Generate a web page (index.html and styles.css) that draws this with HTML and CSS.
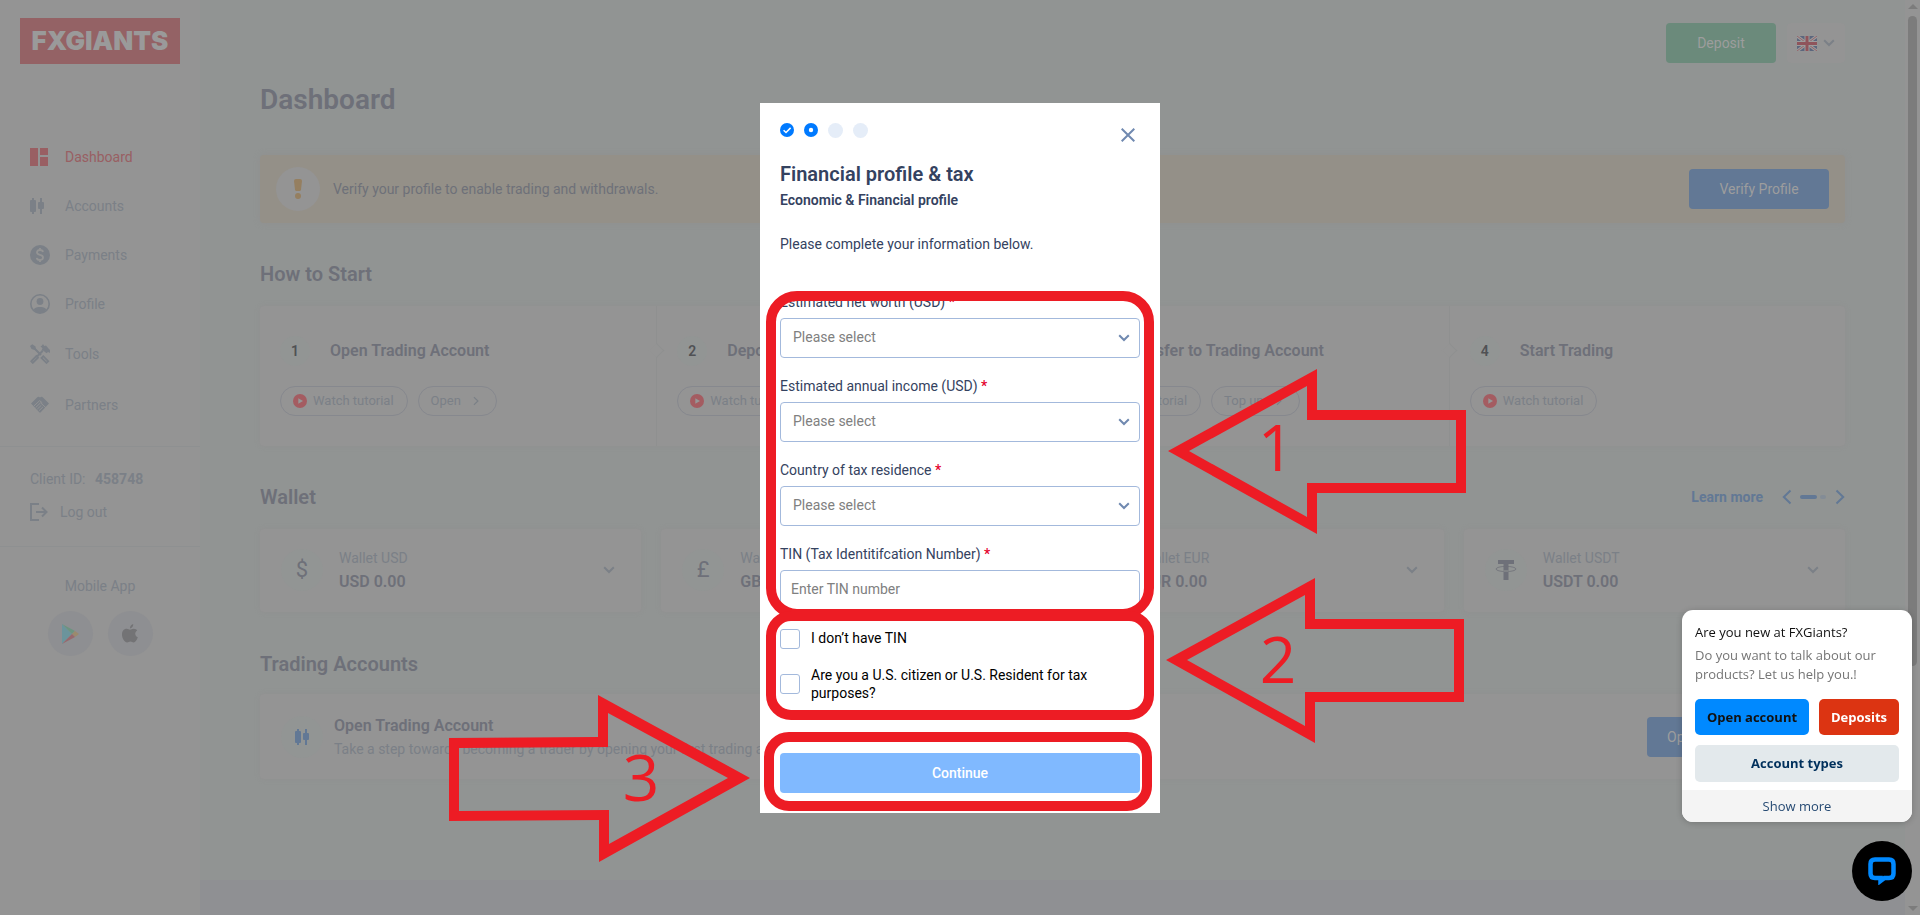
FILE: index.html
```html
<!DOCTYPE html>
<html lang="en">
<head>
<meta charset="utf-8">
<title>FXGiants - Dashboard</title>
<link rel="stylesheet" href="styles.css">
</head>
<body>
<svg class="sprite" aria-hidden="true">
  <symbol id="chev-down" viewBox="0 0 12 8"><path d="M1.2 1.2 6 6l4.800-4.800" fill="none" stroke="currentColor" stroke-width="2"/></symbol>
  <symbol id="chev-right" viewBox="0 0 10 16"><path d="M1.500 1.500 8.200 8l-6.700 6.500" fill="none" stroke="currentColor" stroke-width="2"/></symbol>
  <symbol id="candles" viewBox="0 0 14 16"><path d="M0 3q0-1 1-1h1V0h2v2h1q1 0 1 1v10q0 1-1 1H4v2H2v-2H1q-1 0-1-1zM8 5q0-1 1-1h1V0h2v4h1q1 0 1 1v5q0 1-1 1h-1v5h-2v-5H9q-1 0-1-1z" fill="currentColor"/></symbol>
  <symbol id="play" viewBox="0 0 14 14"><circle cx="7" cy="7" r="7" fill="#a45c61"/><path d="M5.300 4.200v5.600L10 7z" fill="#979797"/></symbol>
</svg>
<div class="page">
  <aside class="sidebar">
    <a class="logo" href="#">FXGIANTS</a>
    <nav class="nav">
      <a class="nav-item active" href="#"><span class="nav-icon"><svg width="18" height="18" viewBox="0 0 18 18"><path d="M0 0h8v18H0zM10 0h8v7h-8zM10 9h8v9h-8z" fill="currentColor"/></svg></span>Dashboard</a>
      <a class="nav-item" href="#"><span class="nav-icon"><svg width="14" height="16"><use href="#candles"/></svg></span>Accounts</a>
      <a class="nav-item" href="#"><span class="nav-icon"><svg width="20" height="20" viewBox="0 0 20 20"><circle cx="10" cy="10" r="10" fill="currentColor"/><path d="M13 7q-.3-2-3-2T7 7.200q0 2 3 2.600t3 2.800Q13 15 10 15t-3.200-2.200M10 3v2.200M10 14.800V17" fill="none" stroke="#949494" stroke-width="1.800"/></svg></span>Payments</a>
      <a class="nav-item" href="#"><span class="nav-icon"><svg width="20" height="20" viewBox="0 0 20 20"><circle cx="10" cy="10" r="9.200" fill="none" stroke="currentColor" stroke-width="1.600"/><circle cx="10" cy="7.500" r="3.400" fill="currentColor"/><path d="M3.500 15.500C5 13.500 7.500 13 10 13s5 .5 6.500 2.500Q14 19 10 19t-6.500-3.500z" fill="currentColor"/></svg></span>Profile</a>
      <a class="nav-item tall" href="#"><span class="nav-icon"><svg width="20" height="20" viewBox="0 0 20 20" fill="none" stroke="currentColor"><path d="M3 3l8 8" stroke-width="2"/><path d="M0 2 2.300.2 5.500 2.500 6 5.500 3.800 5.800 1.500 5z" fill="currentColor" stroke="none"/><path d="M13.200 12.200l5 5-1.700 1.700-5-5z" stroke-width="1.800"/><path d="M12.800 6.800l-6 6" stroke-width="2"/><path d="M6.500 12 1.200 17.300l1.600 1.600L8 13.700z" stroke-width="1.800"/><path d="M10.500 2.500 12 1.500 13 0l1.300 2L16 1.500l2.500 3L20 6v3l-2-1-1.500 1.200-3-2.500-2-.2 1-2.200z" fill="currentColor" stroke="none"/></svg></span>Tools</a>
      <a class="nav-item tall" href="#"><span class="nav-icon"><svg width="20" height="17" viewBox="0 0 20 17"><path d="M1 7.500 7 1.400Q8.500.2 10 1.500 11.500.2 13 1.400l6 6.100-8.500 9-1 0z" fill="currentColor"/><path d="M4 9.900 9.700 4.600l2.600 2.300M5.700 11.500l4.900-4.700 5.800 5.400M7.300 13.100l4-3.800M9 14.700l3.800-3.600" fill="none" stroke="#949494" stroke-width=".9"/></svg></span>Partners</a>
    </nav>
    <div class="client">
      <p class="client-id">Client ID: <strong>458748</strong></p>
      <a class="logout" href="#"><svg width="18" height="18" viewBox="0 0 18 18" fill="none" stroke="currentColor" stroke-width="2"><path d="M9 1H1v16h8M6 9h10.500M12 4.500 16.500 9 12 13.500"/></svg>Log out</a>
    </div>
    <div class="apps">
      <p>Mobile App</p>
      <div class="app-links">
        <a class="app" href="#" aria-label="Google Play"><svg width="17" height="20" viewBox="0 0 17 20"><path d="M0 0v20L10 10z" fill="#6b949c"/><path d="M0 0 13 7l-3 3z" fill="#6c9480"/><path d="M13 7l4 3-4 3-3-3z" fill="#9b8a6d"/><path d="M0 20l10-10 3 3z" fill="#97696e"/></svg></a>
        <a class="app" href="#" aria-label="App Store"><svg width="16" height="19" viewBox="0 0 16 19"><path d="M11.200 0q.3 3.200-3.200 4.500Q7.800 1 11.200 0zM8 5.700c1 0 2-1 3.800-1 1.500 0 2.800.8 3.400 1.800-3 1.800-2.300 5.600.6 6.700-.9 2.600-2.400 5.200-4.200 5.200-1.300 0-1.700-.8-3.200-.8s-2 .8-3.200.8C2.800 18.400 0 14.500 0 10.500 0 6.800 2.200 4.700 4.600 4.700c1.500 0 2.500 1 3.400 1z" fill="#737375"/></svg></a>
      </div>
    </div>
  </aside>

  <div class="content">
    <main class="main">
      <header class="topbar">
        <button class="btn btn-green">Deposit</button>
        <button class="lang" aria-label="Language"><svg width="20" height="15" viewBox="0 0 20 15"><path d="M0 0h20v15H0z" fill="#5c667d"/><path d="M0 0l20 15M20 0 0 15" stroke="#9c9c9c" stroke-width="3"/><path d="M0 0l20 15M20 0 0 15" stroke="#956469" stroke-width="1"/><path d="M10 0v15M0 7.500h20" stroke="#9c9c9c" stroke-width="5"/><path d="M10 0v15M0 7.500h20" stroke="#8f545b" stroke-width="3"/></svg><svg width="12" height="8"><use href="#chev-down"/></svg></button>
      </header>
      <h1>Dashboard</h1>
      <div class="alert">
        <span class="alert-icon"><svg width="8" height="20" viewBox="0 0 8 20"><path d="M0 2q0-2 2-2h4q2 0 2 2L7 10.500Q6.800 12 5.500 12h-3Q1.200 12 1 10.500z" fill="#957f60"/><circle cx="4" cy="17" r="3" fill="#957f60"/></svg></span>
        <p>Verify your profile to enable trading and withdrawals.</p>
        <button class="btn btn-verify">Verify Profile</button>
      </div>

      <h2>How to Start</h2>
      <section class="steps">
        <div class="step"><div class="step-head"><span class="num">1</span><h3>Open Trading Account</h3></div>
          <div class="pills"><button class="pill"><svg width="14" height="14"><use href="#play"/></svg>Watch tutorial</button><button class="pill go">Open<svg width="6" height="10"><use href="#chev-right"/></svg></button></div></div>
        <div class="step"><div class="step-head"><span class="num">2</span><h3>Deposit Funds</h3></div>
          <div class="pills"><button class="pill"><svg width="14" height="14"><use href="#play"/></svg>Watch tutorial</button></div></div>
        <div class="step"><div class="step-head"><span class="num">3</span><h3>Transfer to Trading Account</h3></div>
          <div class="pills"><button class="pill"><svg width="14" height="14"><use href="#play"/></svg>Watch tutorial</button><button class="pill go">Top up<svg width="6" height="10"><use href="#chev-right"/></svg></button></div></div>
        <div class="step"><div class="step-head"><span class="num">4</span><h3>Start Trading</h3></div>
          <div class="pills"><button class="pill"><svg width="14" height="14"><use href="#play"/></svg>Watch tutorial</button></div></div>
      </section>

      <div class="row-head">
        <h2>Wallet</h2>
        <div class="pager"><a href="#">Learn more</a>
          <button class="arrow back" aria-label="Previous"><svg width="10" height="16"><use href="#chev-right"/></svg></button>
          <span class="bar"></span><span class="dot"></span>
          <button class="arrow" aria-label="Next"><svg width="10" height="16"><use href="#chev-right"/></svg></button></div>
      </div>
      <section class="wallets">
        <div class="wallet"><span class="round">$</span><div><p>Wallet USD</p><strong>USD 0.00</strong></div><svg class="more" width="12" height="8"><use href="#chev-down"/></svg></div>
        <div class="wallet"><span class="round">£</span><div><p>Wallet GBP</p><strong>GBP 0.00</strong></div><svg class="more" width="12" height="8"><use href="#chev-down"/></svg></div>
        <div class="wallet"><span class="round">€</span><div><p>Wallet EUR</p><strong>EUR 0.00</strong></div><svg class="more" width="12" height="8"><use href="#chev-down"/></svg></div>
        <div class="wallet"><span class="round"><svg width="22" height="20" viewBox="0 0 22 20"><path d="M3 0h16v4h-5.500v16h-5V4H3z" fill="currentColor"/><ellipse cx="11" cy="9" rx="10" ry="2.600" fill="none" stroke="currentColor" stroke-width=".8"/><path d="M8.500 11h5" stroke="#929594"/></svg></span><div><p>Wallet USDT</p><strong>USDT 0.00</strong></div><svg class="more" width="12" height="8"><use href="#chev-down"/></svg></div>
      </section>

      <h2 class="accounts-title">Trading Accounts</h2>
      <section class="account">
        <span class="round blue"><svg width="14" height="16"><use href="#candles"/></svg></span>
        <div class="account-text"><h3>Open Trading Account</h3><p>Take a step towards becoming a trader by opening your first trading account.</p></div>
        <button class="btn btn-open">Open Trading Account</button>
      </section>
    </main>
    <footer class="footer"></footer>
  </div>
  <div class="scroll"><i class="tri up"></i><i class="thumb"></i><i class="tri down"></i></div>
</div>

<div class="overlay">
  <form class="modal" role="dialog" aria-label="Financial profile &amp; tax">
    <div class="modal-top">
      <div class="progress">
        <svg width="14" height="14" viewBox="0 0 14 14"><circle cx="7" cy="7" r="7" fill="#007aff"/><path d="M3.600 7.200 6 9.500l4.600-4.600" fill="none" stroke="#fff" stroke-width="1.500"/></svg>
        <svg width="14" height="14" viewBox="0 0 14 14"><circle cx="7" cy="7" r="7" fill="#007aff"/><circle cx="7" cy="7" r="2.200" fill="#fff"/></svg>
        <span class="pending"></span><span class="pending"></span>
      </div>
      <button class="close" type="button" aria-label="Close"><svg width="14" height="14" viewBox="0 0 14 14"><path d="M.7.7l12.600 12.600M13.300.7.7 13.300" stroke="#7089b0" stroke-width="2"/></svg></button>
    </div>
    <h2 class="modal-title">Financial profile &amp; tax</h2>
    <h3 class="modal-sub">Economic &amp; Financial profile</h3>
    <p class="modal-text">Please complete your information below.</p>
    <div class="field"><label for="worth">Estimated net worth (USD) <b>*</b></label>
      <div class="select"><select id="worth"><option>Please select</option></select><svg width="12" height="8"><use href="#chev-down"/></svg></div></div>
    <div class="field"><label for="income">Estimated annual income (USD) <b>*</b></label>
      <div class="select"><select id="income"><option>Please select</option></select><svg width="12" height="8"><use href="#chev-down"/></svg></div></div>
    <div class="field"><label for="country">Country of tax residence <b>*</b></label>
      <div class="select"><select id="country"><option>Please select</option></select><svg width="12" height="8"><use href="#chev-down"/></svg></div></div>
    <div class="field"><label for="tin">TIN (Tax Identitifcation Number) <b>*</b></label>
      <input class="text" id="tin" type="text" placeholder="Enter TIN number"></div>
    <div class="check"><input type="checkbox" id="notin"><label for="notin">I don’t have TIN</label></div>
    <div class="check us"><input type="checkbox" id="us"><label for="us">Are you a U.S. citizen or U.S. Resident for tax purposes?</label></div>
    <button class="continue" type="button">Continue</button>
  </form>
</div>

<svg class="marks" viewBox="0 0 1920 915" preserveAspectRatio="xMidYMid meet">
  <g fill="none" stroke="#ed1c24" stroke-width="10">
    <rect x="771" y="296" width="378" height="318" rx="26"/>
    <rect x="771" y="616" width="378" height="99" rx="20"/>
    <rect x="769" y="737" width="378" height="69" rx="20"/>
  </g>
  <g fill="#ed1c24" fill-rule="evenodd">
    <path d="M1168 451l149-82v41h149v83h-149v41zM1189 451l118-65v34h149v63h-149v34z"/>
    <path d="M1166 660l149-82v41h149v83h-149v41zM1187 660l118-65v34h149v63h-149v34z"/>
    <path d="M449 738l149-1v-42l152 83-151 84v-42l-150 1zM459 748l149-1v-34l120 65-119 66v-34l-150 1z"/>
  </g>
  <g class="mark-text" fill="#ed1c24" text-anchor="middle">
    <text x="1276" y="471">1</text><text x="1278" y="683">2</text><text x="641" y="801">3</text>
  </g>
</svg>

<div class="chat">
  <div class="chat-card">
    <div class="chat-body">
      <p class="chat-q">Are you new at FXGiants?</p>
      <p class="chat-a">Do you want to talk about our products? Let us help you.!</p>
      <div class="chat-buttons">
        <button class="c-blue">Open account</button><button class="c-red">Deposits</button><button class="c-gray">Account types</button>
      </div>
    </div>
    <button class="chat-more">Show more</button>
  </div>
  <button class="bubble" aria-label="Chat"><svg width="28" height="28" viewBox="0 0 28 28"><path d="M7 2.500h14q4.500 0 4.500 4.500v9.500q0 4.500-4.500 4.500h-4.500L12.500 24v-3H7q-4.500 0-4.500-4.500V7q0-4.500 4.500-4.500z" fill="none" stroke="#0089ff" stroke-width="4.500"/></svg></button>
</div>
</body>
</html>
```
FILE: styles.css
```css
* { box-sizing: border-box; margin: 0; padding: 0; }
body { font: 14px/18px Roboto, "Liberation Sans", sans-serif; color: #7b8087; background: #949494; }
a { color: inherit; text-decoration: none; }
button, input, select { font: inherit; color: inherit; border: 0; background: none; }
svg { display: block; flex: none; }
.sprite { position: absolute; width: 0; height: 0; }
h1, h2, h3 { color: #6e7079; font-weight: 600; }
h1 { font-size: 28px; line-height: 36px; }
h2 { font-size: 20px; line-height: 24px; }
h3 { font-size: 16px; line-height: 20px; }

.page { display: grid; grid-template-columns: 200px 1fr 15px; min-height: 100vh; }

/* Sidebar */
.sidebar { padding-top: 18px; }
.logo { display: flex; align-items: center; justify-content: center; width: 160px; height: 46px; margin-left: 20px; background: #946265; color: #9a9a9a; font: 900 26px/30px Inter, sans-serif; }
.nav { display: flex; flex-direction: column; padding: 68px 0 16px 30px; }
.nav-item { display: flex; align-items: center; height: 49px; }
.nav-item.tall { height: 51px; }
.nav-item.active { color: #995f63; }
.nav-icon { width: 35px; }
.client { display: grid; gap: 15px; padding: 23px 30px 25px; border-top: 1px solid #8e9091; border-bottom: 1px solid #8e9091; }
.client-id strong { margin-left: 6px; font-weight: 700; }
.logout { display: flex; gap: 12px; align-items: center; }
.apps { padding-top: 30px; text-align: center; }
.app-links { display: flex; justify-content: center; gap: 15px; margin-top: 16px; }
.app { display: flex; align-items: center; justify-content: center; width: 45px; height: 45px; border-radius: 50%; background: #8e8f92; }

/* Main column */
.content { display: flex; flex-direction: column; background: #919493; }
.main { flex: 1; padding: 23px 60px 100px; }
.footer { height: 35px; background: #8f9093; }
.topbar { display: flex; justify-content: flex-end; gap: 11px; margin-bottom: 19px; }
.btn { height: 40px; border-radius: 4px; color: #9d9d9d; padding: 0 20px; }
.btn-green { width: 110px; background: #6b8a7b; }
.btn-verify { width: 140px; background: #627895; }
.btn-open { background: #627895; }
.lang { display: flex; align-items: center; gap: 6px; height: 40px; padding: 0 10px; border-radius: 4px; background: #949494; }
.alert { display: flex; align-items: center; height: 68px; margin: 37px 0 39px; padding: 0 16px; border-radius: 4px; background: #949088; color: #6e7079; box-shadow: 0 0 6px #908f8f; }
.alert p { flex: 1; margin-left: 13px; }
.alert-icon { display: flex; align-items: center; justify-content: center; width: 44px; height: 44px; border-radius: 50%; background: #949494; }

.steps { display: grid; grid-template-columns: repeat(4, 1fr); height: 140px; margin: 20px 0 39px; border-radius: 4px; background: #949494; box-shadow: 0 0 5px #909090; }
.step { position: relative; padding: 30px 20px 0; }
.step + .step { border-left: 1px solid #8f9090; }
.step + .step::before { content: ""; position: absolute; left: -6px; top: 39px; width: 10px; height: 10px; border: solid #8f9090; border-width: 1px 1px 0 0; background: #949494; transform: rotate(45deg); }
.step-head { display: flex; align-items: center; gap: 20px; height: 30px; }
.num { width: 30px; height: 30px; line-height: 30px; border-radius: 50%; background: #929594; color: #505154; font-weight: 600; text-align: center; }
.pills { display: flex; gap: 10px; margin-top: 20px; }
.pill { display: flex; align-items: center; gap: 6px; height: 30px; padding: 0 13px 0 12px; border: 1px solid #86888e; border-radius: 15px; font-size: 13px; }
.pill.go { gap: 12px; padding-right: 17px; }

.row-head { display: flex; justify-content: space-between; align-items: center; }
.pager { display: flex; align-items: center; color: #627895; font-weight: 700; }
.pager a { margin-right: 19px; }
.arrow.back { transform: scaleX(-1); }
.bar { width: 17px; height: 4px; margin: 0 3px 0 8px; border-radius: 2px; background: #627895; }
.dot { width: 6px; height: 4px; margin-right: 9px; border-radius: 2px; background: #838c96; }
.wallets { display: grid; grid-template-columns: repeat(4, 1fr); gap: 20px; margin: 20px 0 40px; }
.wallet { display: flex; align-items: center; gap: 16px; height: 83px; padding: 0 26px 1px 21px; border-radius: 4px; background: #949494; box-shadow: 0 0 5px #909090; }
.wallet div { flex: 1; }
.wallet strong { display: block; font-size: 16px; line-height: 20px; margin-top: 5px; font-weight: 600; color: #6e7079; }
.round { display: flex; align-items: center; justify-content: center; flex: none; width: 42px; height: 42px; border-radius: 50%; background: #929594; color: #6e7079; font-size: 22px; }
.round.blue { color: #627895; }
.account { display: flex; align-items: center; gap: 11px; height: 85px; margin-top: 18px; padding: 0 20px 0 21px; border-radius: 4px; background: #949494; box-shadow: 0 0 5px #909090; }
.account-text { flex: 1; }
.account-text p { margin-top: 4px; }

.scroll { display: flex; flex-direction: column; align-items: center; padding: 4px 0; }
.tri { border: 5px solid transparent; }
.tri.up { border-top-width: 0; border-bottom-color: #7c7c7c; }
.tri.down { margin-top: auto; border-bottom-width: 0; border-top-color: #7c7c7c; }
.thumb { width: 9px; height: 71vh; margin-top: 7px; border-radius: 5px; background: #7c7c7c; }

/* Modal */
.overlay { position: fixed; inset: 0; display: flex; align-items: center; justify-content: center; padding-top: 1px; }
.modal { width: 400px; padding: 20px; background: #fff; color: #344260; }
.modal-top { display: flex; justify-content: space-between; }
.progress { display: flex; gap: 10px; height: 15px; }
.pending { width: 15px; height: 15px; border-radius: 50%; background: #e5edf8; }
.close { margin: 5px 5px 0 0; }
.modal-title { margin-top: 20px; color: inherit; }
.modal-sub { margin-top: 5px; color: inherit; font-size: 14px; line-height: 18px; }
.modal-text { margin: 26px 0 40px; }
.field { margin-bottom: 19px; }
.field label { display: block; margin-bottom: 7px; }
.field b { color: #e4002b; font-weight: 500; }
.select { position: relative; color: #7089b0; }
.select svg { position: absolute; right: 10px; top: 16px; pointer-events: none; }
.select select, .text { display: block; width: 100%; height: 40px; border: 1px solid #a3b9dc; border-radius: 4px; background: #fff; }
.select select { appearance: none; padding: 0 12px 2px; color: #808080; }
.text { padding: 0 10px 2px; }
.text::placeholder { color: #808080; }
.check { display: flex; gap: 11px; min-height: 20px; margin-top: 17px; color: #000; }
.check label { max-width: 300px; }
.check.us { align-items: center; }
.check input { appearance: none; flex: none; width: 20px; height: 20px; border: 1px solid #a3b9dc; border-radius: 3px; }
.continue { width: 100%; height: 40px; margin-top: 51px; border-radius: 4px; background: #80b9ff; color: #fff; font-weight: 500; }

.marks { position: fixed; inset: 0; width: 100%; height: 100%; pointer-events: none; }
.mark-text { font: 64px "Open Sans", sans-serif; }

/* Chat widget */
.chat { position: fixed; right: 8px; bottom: 14px; display: flex; flex-direction: column; align-items: flex-end; gap: 19px; font: 13px/19px "Open Sans", "Noto Sans", sans-serif; }
.chat-card { width: 230px; border-radius: 11px; overflow: hidden; background: #fff; box-shadow: 0 1px 6px rgba(0,0,0,.2); }
.chat-body { padding: 13px 13px 8px; }
.chat-q { color: #111; }
.chat-a { margin-top: 4px; color: #757575; }
.chat-buttons { display: flex; flex-wrap: wrap; gap: 10px; margin-top: 15px; }
.chat-buttons button { height: 36px; border-radius: 5px; font-weight: 700; }
.chat-buttons .c-blue { width: 114px; background: #0089ff; color: #111; }
.chat-buttons .c-red { flex: 1; background: #dc3412; color: #fff; }
.chat-buttons .c-gray { width: 100%; height: 37px; background: #e3e9ec; color: #00305c; }
.chat-more { width: 100%; height: 32px; background: #f4f4f4; color: #264a73; }
.bubble { display: flex; align-items: center; justify-content: center; width: 60px; height: 60px; border-radius: 50%; background: #000; }
```
